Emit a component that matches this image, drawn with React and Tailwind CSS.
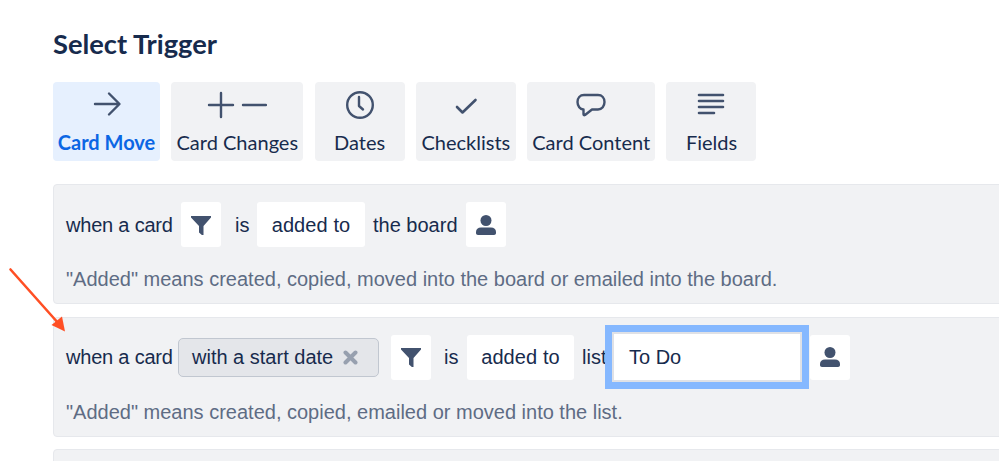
import React from 'react';

const lato = 'font-[Lato,sans-serif]';

function ArrowIcon() {
  return (
    <svg width="30" height="30" viewBox="0 0 30 30" fill="none" stroke="#42526e" strokeWidth="2.4" strokeLinecap="round" strokeLinejoin="round">
      <path d="M3 15h24M17 4.500l10.500 10.500L17 25.500" />
    </svg>
  );
}

function PlusMinusIcon() {
  return (
    <svg width="60" height="30" viewBox="0 0 60 30" fill="none" stroke="#42526e" strokeWidth="2.4" strokeLinecap="round">
      <path d="M14 4v24M2 16h24M36 16h23" />
    </svg>
  );
}

function ClockIcon() {
  return (
    <svg width="30" height="30" viewBox="0 0 30 30" fill="none" stroke="#42526e" strokeWidth="2.4" strokeLinecap="round" strokeLinejoin="round">
      <circle cx="15" cy="16" r="12.800" />
      <path d="M14 8v9l4 3.500" />
    </svg>
  );
}

function CheckIcon() {
  return (
    <svg width="30" height="30" viewBox="0 0 30 30" fill="none" stroke="#42526e" strokeWidth="2.6" strokeLinecap="round" strokeLinejoin="round">
      <path d="M6 18l5.500 5.500L24.500 11" />
    </svg>
  );
}

function BubbleIcon() {
  return (
    <svg width="30" height="30" viewBox="0 0 30 30" fill="none" stroke="#42526e" strokeWidth="2.4" strokeLinecap="round" strokeLinejoin="round">
      <path d="M8 6h14c4 0 6.500 3 6.500 7s-2.500 7.500-6.500 7.500h-6l-7 5.500c-1 .5-1.500 0-1.500-1v-4.500C4 20.500 1.500 17 1.500 13S4 6 8 6z" />
    </svg>
  );
}

function LinesIcon() {
  return (
    <svg width="30" height="30" viewBox="0 0 30 30" fill="none" stroke="#42526e" strokeWidth="2.600" strokeLinecap="round">
      <path d="M3 6h24M3 12h24M3 18h24M3 24h15" />
    </svg>
  );
}

function FilterIcon() {
  return (
    <svg width="20" height="20" viewBox="0 0 20 20" fill="#42526e">
      <path d="M0 1h20v1.500L12.500 11v9l-1 .500-3.500-3V11L0 2.500z" />
    </svg>
  );
}

function PersonIcon() {
  return (
    <svg width="20" height="20" viewBox="0 0 20 20" fill="#42526e">
      <circle cx="10" cy="5.500" r="5.500" />
      <path d="M0 17c0-3 2-4.500 5-4.500h10c3 0 5 1.500 5 4.500v1c0 1-.8 2-2 2H2c-1.200 0-2-1-2-2z" />
    </svg>
  );
}

function Tab({ label, active, width, icon }) {
  return (
    <div className={`flex h-[79px] flex-col items-center rounded-[4px] pt-[7px] ${width} ${active ? 'bg-[#e6f0fe]' : 'bg-[#f1f2f4]'}`}>
      <div className="flex h-[30px] items-center justify-center">{icon}</div>
      <span className={`mt-[11px] whitespace-nowrap text-[20px] leading-[24px] ${active ? 'font-bold text-[#0b66e4]' : 'text-[#172b4d]'}`}>{label}</span>
    </div>
  );
}

function Box({ children, className }) {
  return (
    <div className={`flex h-[45px] items-center justify-center rounded-[3px] bg-white ${className}`}>{children}</div>
  );
}

function Panel({ children, note }) {
  return (
    <div className="h-[120px] w-[1000px] rounded-[4px] border border-[#e6e8ec] bg-[#f1f2f4] pl-[12px] pt-[17px]">
      <div className="flex h-[45px] items-center text-[20px] text-[#172b4d]">{children}</div>
      <p className="mt-[19px] text-[20px] leading-[26px] text-[#5e6c84]">{note}</p>
    </div>
  );
}

export default function App() {
  return (
    <div className="relative h-[461px] w-[999px] overflow-hidden bg-white pl-[53px] font-['Liberation_Sans',sans-serif]">
      <h1 className={`pt-[28px] text-[27.3px] font-bold leading-[32px] text-[#172b4d] ${lato}`}>Select Trigger</h1>

      <div className={`mt-[22px] flex gap-[11.3px] ${lato}`}>
        <Tab label="Card Move" active width="w-[107px]" icon={<ArrowIcon />} />
        <Tab label="Card Changes" width="w-[132px]" icon={<PlusMinusIcon />} />
        <Tab label="Dates" width="w-[90px]" icon={<ClockIcon />} />
        <Tab label="Checklists" width="w-[100px]" icon={<CheckIcon />} />
        <Tab label="Card Content" width="w-[128px]" icon={<BubbleIcon />} />
        <Tab label="Fields" width="w-[90px]" icon={<LinesIcon />} />
      </div>

      <div className="mt-[23px] flex flex-col gap-[12.5px]">
        <Panel note={'"Added" means created, copied, moved into the board or emailed into the board.'}>
          <span className="w-[115px] whitespace-nowrap tracking-[-0.2px]">when a card</span>
          <Box className="w-[40px]"><FilterIcon /></Box>
          <span className="ml-[14px] w-[22px]">is</span>
          <Box className="w-[108px] tracking-[0.1px]">added to</Box>
          <span className="ml-[8px] w-[93px] whitespace-nowrap">the board</span>
          <Box className="w-[40px]"><PersonIcon /></Box>
        </Panel>

        <Panel note={'"Added" means created, copied, emailed or moved into the list.'}>
          <span className="w-[112px] whitespace-nowrap tracking-[-0.2px]">when a card</span>
          <div className="flex h-[39px] w-[201px] items-center rounded-[5px] border border-[#c1c7d0] bg-[#e4e6ea] pl-[13px]">
            <span className="whitespace-nowrap">with a start date</span>
            <svg className="ml-[10px]" width="15" height="15" viewBox="0 0 15 15" fill="none" stroke="#97a0af" strokeWidth="4" strokeLinecap="round">
              <path d="M2.500 2.500l10 10M12.500 2.500l-10 10" />
            </svg>
          </div>
          <Box className="ml-[12px] w-[40px]"><FilterIcon /></Box>
          <span className="ml-[13px] w-[23px]">is</span>
          <Box className="w-[107px] tracking-[0.1px]">added to</Box>
          <span className="ml-[8px] w-[30px]">list</span>
          <div className="relative z-10 flex h-[50px] w-[190px] items-center border-2 border-[#dfe1e6] bg-white pl-[15px] shadow-[0_0_0_7px_#85b8ff]">To Do</div>
          <Box className="ml-[8px] w-[40px]"><PersonIcon /></Box>
        </Panel>

        <Panel note="" />
      </div>

      <svg className="absolute left-0 top-[260px]" width="80" height="80" viewBox="0 0 80 80" fill="none">
        <path d="M10.500 9.500L59 64" stroke="#ff4f24" strokeWidth="2.600" strokeLinecap="round" />
        <path d="M65 71.500L51.500 65 62 56.500z" fill="#ff4f24" />
      </svg>
    </div>
  );
}
